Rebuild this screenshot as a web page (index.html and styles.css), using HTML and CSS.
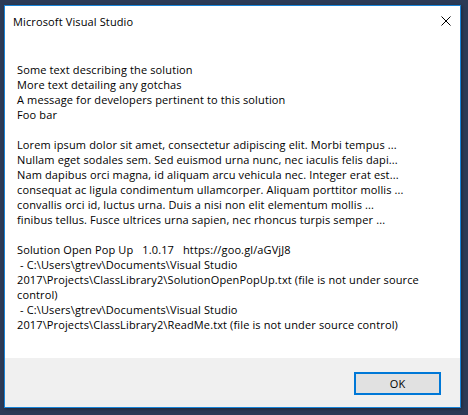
FILE: index.html
```html
<!DOCTYPE html>
<html>
<head>
<meta charset="utf-8">
<link rel="stylesheet" href="styles.css">
</head>
<body>
<div class="dialog">
  <div class="titlebar">
    <span class="title">Microsoft Visual Studio</span>
    <svg class="close" width="10" height="10" viewBox="0 0 10 10"><path d="M0.5 0.5 L9.5 9.5 M9.5 0.5 L0.5 9.5" stroke="#000" stroke-width="1" fill="none"/></svg>
  </div>
  <div class="content">
    <div class="para">
      <div class="line">Some text describing the solution</div>
      <div class="line">More text detailing any gotchas</div>
      <div class="line">A message for developers pertinent to this solution</div>
      <div class="line">Foo bar</div>
    </div>
    <div class="para">
      <div class="line">Lorem ipsum dolor sit amet, consectetur adipiscing elit. Morbi tempus ...</div>
      <div class="line">Nullam eget sodales sem. Sed euismod urna nunc, nec iaculis felis dapi...</div>
      <div class="line">Nam dapibus orci magna, id aliquam arcu vehicula nec. Integer erat est...</div>
      <div class="line">consequat ac ligula condimentum ullamcorper. Aliquam porttitor mollis ...</div>
      <div class="line">convallis orci id, luctus urna. Duis a nisi non elit elementum mollis ...</div>
      <div class="line">finibus tellus. Fusce ultrices urna sapien, nec rhoncus turpis semper ...</div>
    </div>
    <div class="para">
      <div class="line">Solution Open Pop Up   1.0.17   https://goo.gl/aGVjJ8</div>
      <div class="line"> - C:\Users\gtrev\Documents\Visual Studio</div>
      <div class="line">2017\Projects\ClassLibrary2\SolutionOpenPopUp.txt (file is not under source</div>
      <div class="line">control)</div>
      <div class="line"> - C:\Users\gtrev\Documents\Visual Studio</div>
      <div class="line">2017\Projects\ClassLibrary2\ReadMe.txt (file is not under source control)</div>
    </div>
  </div>
  <div class="footer">
    <button class="ok">OK</button>
  </div>
</div>
</body>
</html>
```
FILE: styles.css
```css
html, body {
  margin: 0;
  padding: 0;
  background: #2c3a56;
  width: 468px;
  height: 415px;
  overflow: hidden;
}
body {
  padding-top: 5px;
  padding-left: 4px;
  box-sizing: border-box;
  font-family: "Open Sans", "Noto Sans", "Liberation Sans", sans-serif;
  font-size: 11px;
  letter-spacing: 0.13px;
  color: #000;
}
.dialog {
  width: 457px;
  height: 403px;
  box-sizing: border-box;
  border: 1px solid #1883d7;
  background: #fff;
  display: flex;
  flex-direction: column;
  box-shadow: 1px 1px 3px rgba(0,0,0,0.35);
}
.titlebar {
  height: 31px;
  display: flex;
  align-items: center;
  justify-content: space-between;
  padding: 0 9px 0 8px;
  flex: none;
}
.title {
  line-height: 16px;
}
.close {
  display: block;
  margin-top: -1px;
}
.content {
  flex: 1;
  padding: 25px 0 0 12px;
  display: flex;
  flex-direction: column;
  gap: 15px;
}
.line {
  line-height: 15px;
  height: 15px;
  white-space: pre;
}
.footer {
  flex: none;
  height: 49px;
  background: #f0f0f0;
  display: flex;
  justify-content: flex-end;
  align-items: flex-start;
  padding: 14px 19px 0 0;
  box-sizing: border-box;
}
.ok {
  width: 87px;
  height: 23px;
  box-sizing: border-box;
  border: 2px solid #0078d7;
  background: #e1e1e1;
  font-family: inherit;
  font-size: 11px;
  letter-spacing: 0.13px;
  color: #000;
  padding: 0;
  margin: 0;
}
```
